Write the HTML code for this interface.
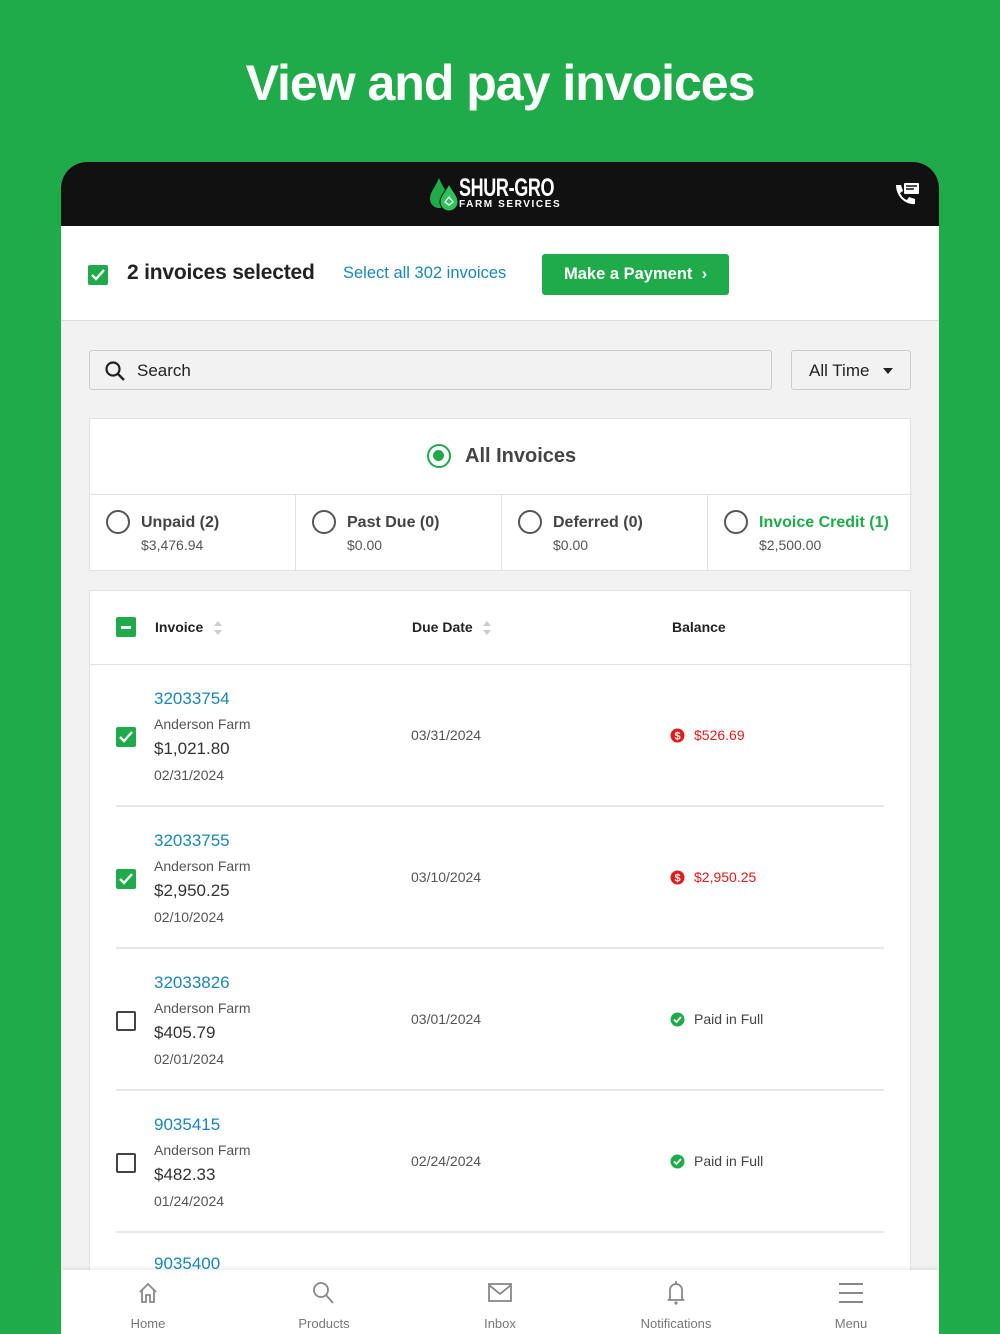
<!DOCTYPE html>
<html><head><meta charset="utf-8"><style>
*{margin:0;padding:0;box-sizing:border-box}
body{width:1000px;height:1334px;background:#1fab4a;font-family:"Liberation Sans",Roboto,sans-serif;position:relative;overflow:hidden;color:#333}
.abs{position:absolute}
h1{position:absolute;top:54px;left:0;width:1000px;text-align:center;color:#fff;font-size:50px;font-weight:bold;letter-spacing:-1px}
.card{position:absolute;left:61px;top:162px;width:878px;height:1172px;background:#f2f2f2;border-radius:26px 26px 0 0;overflow:hidden}
.hdr{position:absolute;left:0;top:0;width:878px;height:64px;background:#111}
.band{position:absolute;left:0;top:64px;width:878px;height:95px;background:#fff;border-bottom:1px solid #ddd}
.cb{position:absolute;width:20px;height:20px;border-radius:2px;background:#1fab4a}
.cbo{position:absolute;width:20px;height:20px;border:2px solid #444;border-radius:2px;background:#fff}
.panel{position:absolute;background:#fff;border:1px solid #e2e2e2}
.rad{position:absolute;width:24px;height:24px;border:2px solid #555;border-radius:50%}
.t{position:absolute;white-space:nowrap}
.link{color:#1a86b8}
.div{position:absolute;left:26px;width:768px;height:2px;background:#e8e8e8}
.nav{position:absolute;left:0;top:1108px;width:878px;height:64px;background:#fff;box-shadow:0 -2px 4px rgba(0,0,0,0.08)}
.nv{position:absolute;top:46px;font-size:13px;color:#777;width:120px;text-align:center}
</style></head><body>
<h1>View and pay invoices</h1>
<div class="card">
 <div class="hdr">
  <svg class="abs" style="left:367px;top:14px" width="34" height="36" viewBox="0 0 34 36"><path d="M11 2 C15 12 20 16 20 23 A9 9 0 0 1 2 23 C2 16 7 12 11 2Z" fill="#1fab4a"/><path d="M21 8 C25 16 30 20 30 26 A9 9 0 0 1 12 26 C12 20 17 16 21 8Z" fill="#2dc35a" stroke="#111" stroke-width="1"/><path d="M17 26 l4-5 4 5 -4 3z" fill="none" stroke="#fff" stroke-width="1.3"/></svg>
  <div class="t" style="left:398px;top:12px;color:#fff;font-weight:bold;font-size:25px;letter-spacing:-0.5px;transform:scaleX(0.72);transform-origin:left">SHUR-GRO</div>
  <div class="t" style="left:398px;top:37px;color:#fff;font-weight:bold;font-size:10px;letter-spacing:1.6px">FARM SERVICES</div>
  <svg class="abs" style="left:832px;top:20px" width="28" height="26" viewBox="0 0 28 26"><rect x="11" y="1" width="15" height="11" rx="1" fill="#fff"/><path d="M13 4h11M13 7h8" stroke="#111" stroke-width="1.5"/><path d="M3 3 l5 0 2 6 -3 2 c2 4 4 6 7 7 l2-3 6 2 0 5 c-10 1-19-8-19-19z" fill="#fff"/></svg>
 </div>
 <div class="band">
  <div class="cb" style="left:27px;top:39px"><svg width="20" height="20"><path d="M4 10l4 4 8-9" stroke="#fff" stroke-width="2.4" fill="none"/></svg></div>
  <div class="t" style="left:66px;top:35px;font-size:21px;font-weight:bold;color:#222;letter-spacing:-0.2px">2 invoices selected</div>
  <div class="t link" style="left:282px;top:38px;font-size:16.5px">Select all 302 invoices</div>
  <div class="abs" style="left:481px;top:28px;width:187px;height:41px;background:#1fab4a;border-radius:3px;color:#fff;font-weight:bold;font-size:16.5px;line-height:41px;padding-left:22px">Make a Payment&nbsp; ›</div>
 </div>
 <div class="abs" style="left:28px;top:188px;width:683px;height:40px;border:1px solid #ccc;border-radius:3px;background:#f2f2f2">
  <svg class="abs" style="left:14px;top:9px" width="22" height="22"><circle cx="9" cy="9" r="6.5" stroke="#222" stroke-width="2.2" fill="none"/><path d="M14 14l6 6" stroke="#222" stroke-width="2.4"/></svg>
  <div class="t" style="left:47px;top:10px;font-size:17px;color:#222">Search</div>
 </div>
 <div class="abs" style="left:730px;top:188px;width:120px;height:40px;border:1px solid #ccc;border-radius:3px;background:#f2f2f2">
  <div class="t" style="left:17px;top:10px;font-size:17px;color:#222">All Time</div>
  <div class="abs" style="left:91px;top:17px;border-left:5px solid transparent;border-right:5px solid transparent;border-top:6px solid #222"></div>
 </div>
 <div class="panel" style="left:28px;top:256px;width:822px;height:153px">
  <div class="rad" style="left:337px;top:25px;border:2.5px solid #1fab4a"><div style="margin:4px;width:11px;height:11px;border-radius:50%;background:#1fab4a"></div></div>
  <div class="t" style="left:375px;top:26px;font-size:20px;font-weight:bold;color:#444">All Invoices</div>
  <div class="abs" style="left:0;top:75px;width:822px;height:1px;background:#e2e2e2"></div>
  <div class="abs" style="left:205px;top:76px;width:1px;height:76px;background:#e2e2e2"></div>
  <div class="abs" style="left:411px;top:76px;width:1px;height:76px;background:#e2e2e2"></div>
  <div class="abs" style="left:617px;top:76px;width:1px;height:76px;background:#e2e2e2"></div>
  <div class="rad" style="left:16px;top:91px"></div>
  <div class="t" style="left:51px;top:95px;font-size:16px;font-weight:bold;color:#444">Unpaid (2)</div>
  <div class="t" style="left:51px;top:118px;font-size:14px;color:#555">$3,476.94</div>
  <div class="rad" style="left:222px;top:91px"></div>
  <div class="t" style="left:257px;top:95px;font-size:16px;font-weight:bold;color:#444">Past Due (0)</div>
  <div class="t" style="left:257px;top:118px;font-size:14px;color:#555">$0.00</div>
  <div class="rad" style="left:428px;top:91px"></div>
  <div class="t" style="left:463px;top:95px;font-size:16px;font-weight:bold;color:#444">Deferred (0)</div>
  <div class="t" style="left:463px;top:118px;font-size:14px;color:#555">$0.00</div>
  <div class="rad" style="left:634px;top:91px"></div>
  <div class="t" style="left:669px;top:95px;font-size:16px;font-weight:bold;color:#1fab4a">Invoice Credit (1)</div>
  <div class="t" style="left:669px;top:118px;font-size:14px;color:#555">$2,500.00</div>
 </div>
 <div class="panel" style="left:28px;top:428px;width:822px;height:760px">
  <div class="cb" style="left:26px;top:26px"><div style="margin:9px 5px;width:10px;height:2.5px;background:#fff"></div></div>
  <div class="t" style="left:65px;top:28px;font-size:14px;font-weight:bold;color:#222">Invoice</div>
  <svg class="abs" style="left:123px;top:29px" width="10" height="16"><path d="M1 6l4-5 4 5zM1 10l4 5 4-5z" fill="#ccc"/></svg>
  <div class="t" style="left:322px;top:28px;font-size:14px;font-weight:bold;color:#222">Due Date</div>
  <svg class="abs" style="left:392px;top:29px" width="10" height="16"><path d="M1 6l4-5 4 5zM1 10l4 5 4-5z" fill="#ccc"/></svg>
  <div class="t" style="left:582px;top:28px;font-size:14px;font-weight:bold;color:#222">Balance</div>
  <div class="abs" style="left:0;top:73px;width:822px;height:1px;background:#e2e2e2"></div>
 </div>
 <div id="rows"></div>
 <div class="nav">
  <svg class="abs" style="left:76px;top:12px" width="22" height="22" viewBox="0 0 22 22"><path d="M3 10L11 2l8 8M5 8v12h4v-7h4v7h4V8" fill="none" stroke="#888" stroke-width="1.8"/></svg>
  <div class="nv" style="left:27px">Home</div>
  <svg class="abs" style="left:251px;top:11px" width="24" height="24"><circle cx="9" cy="9" r="7" stroke="#888" stroke-width="1.8" fill="none"/><path d="M14 14l7 8" stroke="#888" stroke-width="1.8"/></svg>
  <div class="nv" style="left:203px">Products</div>
  <svg class="abs" style="left:427px;top:13px" width="24" height="20"><rect x="1" y="1" width="22" height="17" fill="none" stroke="#888" stroke-width="1.8"/><path d="M1 2l11 9 11-9" fill="none" stroke="#888" stroke-width="1.8"/></svg>
  <div class="nv" style="left:379px">Inbox</div>
  <svg class="abs" style="left:604px;top:10px" width="22" height="26"><path d="M11 1v3M5 19V10a6 6 0 0 1 12 0v9l2 1H3z" fill="none" stroke="#888" stroke-width="1.8"/><circle cx="11" cy="23" r="1.6" fill="#888"/></svg>
  <div class="nv" style="left:555px">Notifications</div>
  <svg class="abs" style="left:778px;top:12px" width="24" height="22"><path d="M0 2h24M0 11h24M0 20h24" stroke="#888" stroke-width="2"/></svg>
  <div class="nv" style="left:730px">Menu</div>
 </div>
</div>
<script>
var rows=[["32033754","$1,021.80","02/31/2024","03/31/2024",1,"$526.69"],["32033755","$2,950.25","02/10/2024","03/10/2024",1,"$2,950.25"],["32033826","$405.79","02/01/2024","03/01/2024",0,""],["9035415","$482.33","01/24/2024","02/24/2024",0,""]];
var h="";rows.forEach(function(r,i){var y=502+i*142;var X=28;
h+=(r[4]?'<div class="cb" style="left:'+(X+27)+'px;top:'+(y+63)+'px"><svg width="20" height="20"><path d="M4 10l4 4 8-9" stroke="#fff" stroke-width="2.4" fill="none"/></svg></div>':'<div class="cbo" style="left:'+(X+27)+'px;top:'+(y+63)+'px"></div>');
h+='<div class="t link" style="left:'+(X+65)+'px;top:'+(y+25)+'px;font-size:17px">'+r[0]+'</div>';
h+='<div class="t" style="left:'+(X+65)+'px;top:'+(y+52)+'px;font-size:14px;color:#555">Anderson Farm</div>';
h+='<div class="t" style="left:'+(X+65)+'px;top:'+(y+75)+'px;font-size:17px;color:#333">'+r[1]+'</div>';
h+='<div class="t" style="left:'+(X+65)+'px;top:'+(y+103)+'px;font-size:14px;color:#555">'+r[2]+'</div>';
h+='<div class="t" style="left:'+(X+322)+'px;top:'+(y+63)+'px;font-size:14px;color:#555">'+r[3]+'</div>';
if(r[4]){h+='<svg class="abs" style="left:'+(X+581)+'px;top:'+(y+64)+'px" width="15" height="15"><circle cx="7.5" cy="7.5" r="7" fill="#e21b1b"/><text x="7.5" y="11.5" font-size="11" font-weight="bold" text-anchor="middle" fill="#fff" font-family="Liberation Sans">$</text></svg><div class="t" style="left:'+(X+605)+'px;top:'+(y+63)+'px;font-size:14px;color:#e21b1b">'+r[5]+'</div>';}
else{h+='<svg class="abs" style="left:'+(X+581)+'px;top:'+(y+64)+'px" width="15" height="15"><circle cx="7.5" cy="7.5" r="7" fill="#1fab4a"/><path d="M4 7.5l2.5 2.5 4.5-5" stroke="#fff" stroke-width="1.8" fill="none"/></svg><div class="t" style="left:'+(X+605)+'px;top:'+(y+63)+'px;font-size:14px;color:#444">Paid in Full</div>';}
h+='<div class="div" style="left:55px;top:'+(y+141)+'px"></div>';});
h+='<div class="t link" style="left:93px;top:1092px;font-size:17px">9035400</div>';
document.getElementById('rows').innerHTML=h;
</script>
</body></html>
